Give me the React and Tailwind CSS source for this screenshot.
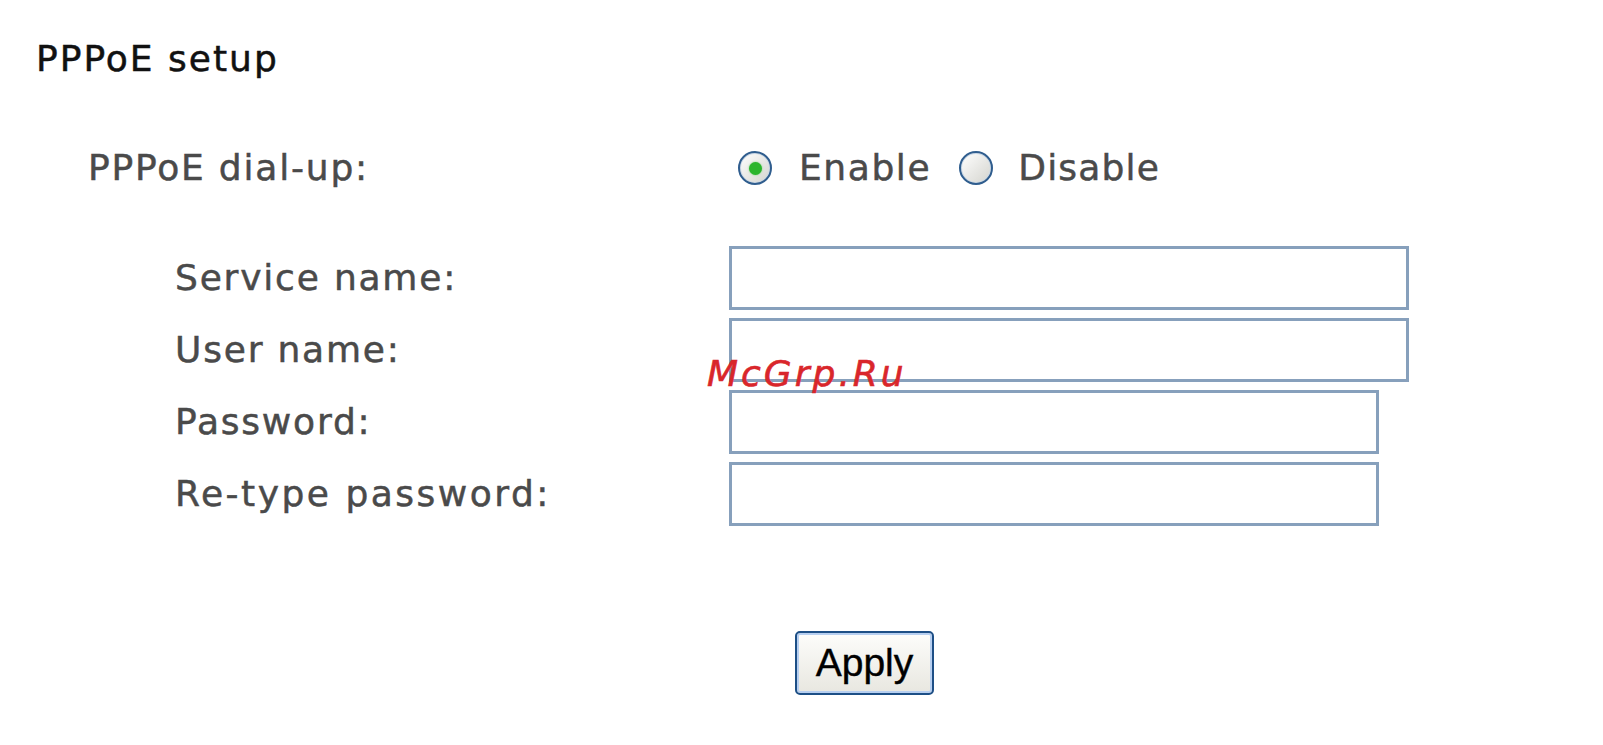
import React from "react";

function Radio({ checked }) {
  return (
    <div className="w-[34px] h-[34px] rounded-full border-[2.5px] border-[#2f5d8e] bg-linear-to-br from-white to-[#d4d4ce] shadow-[inset_0_0_0_1px_#c9d7e6] flex items-center justify-center shrink-0">
      {checked && (
        <div className="w-[13px] h-[13px] rounded-full bg-[#2cb52c] shadow-[0_0_2px_#6fd36f]" />
      )}
    </div>
  );
}

function Row({ label, width, tracking = "tracking-[1.8px]" }) {
  return (
    <div className="flex items-center h-[64px]">
      <div className={`w-[729px] pl-[175px] text-[36px] leading-[40px] ${tracking} text-[#4a4a4a] [-webkit-text-stroke:0.5px_#4a4a4a]`}>
        {label}
      </div>
      <input
        type="text"
        className={`${width} h-[64px] border-[3px] border-[#87a0bc] bg-white outline-none`}
      />
    </div>
  );
}

export default function App() {
  return (
    <div className="relative w-[1603px] h-[745px] bg-white overflow-hidden font-['DejaVu_Sans',Verdana,sans-serif]">
      <div className="pl-[36px] pt-[39px]">
        <h1 className="h-[40px] text-[36px] leading-[40px] tracking-[2px] text-[#111] font-normal [-webkit-text-stroke:0.5px_#111]">
          PPPoE setup
        </h1>
      </div>

      <div className="mt-[65px] flex items-center h-[48px]">
        <div className="w-[738px] pl-[88px] text-[36px] leading-[40px] tracking-[1.8px] text-[#4a4a4a] [-webkit-text-stroke:0.5px_#4a4a4a]">
          PPPoE dial-up:
        </div>
        <div className="flex items-center">
          <Radio checked />
          <span className="ml-[27px] text-[36px] leading-[40px] tracking-[1.6px] text-[#4a4a4a] [-webkit-text-stroke:0.5px_#4a4a4a]">
            Enable
          </span>
          <div className="ml-[28px]">
            <Radio />
          </div>
          <span className="ml-[25px] text-[36px] leading-[40px] tracking-[1.2px] text-[#4a4a4a] [-webkit-text-stroke:0.5px_#4a4a4a]">
            Disable
          </span>
        </div>
      </div>

      <div className="mt-[54px] flex flex-col gap-[8px]">
        <Row label="Service name:" width="w-[680px]" />
        <Row label="User name:" width="w-[680px]" />
        <Row label="Password:" width="w-[650px]" />
        <Row label="Re-type password:" width="w-[650px]" tracking="tracking-[2.5px]" />
      </div>

      <div className="mt-[105px] pl-[795px]">
        <button className="w-[139px] h-[64px] rounded-[5px] border-2 border-[#1d4f86] bg-linear-to-b from-[#fdfdfb] to-[#e8e7e0] shadow-[inset_0_0_0_2px_#b7cff0] font-['Liberation_Sans',Arial,sans-serif] text-[39px] leading-[40px] text-black [-webkit-text-stroke:0.4px_#000]">
          Apply
        </button>
      </div>

      <div className="absolute left-[707px] top-[354px] text-[36px] leading-[40px] italic tracking-[3px] text-[#d9262b] [-webkit-text-stroke:0.6px_#d9262b]">
        McGrp.Ru
      </div>
    </div>
  );
}
